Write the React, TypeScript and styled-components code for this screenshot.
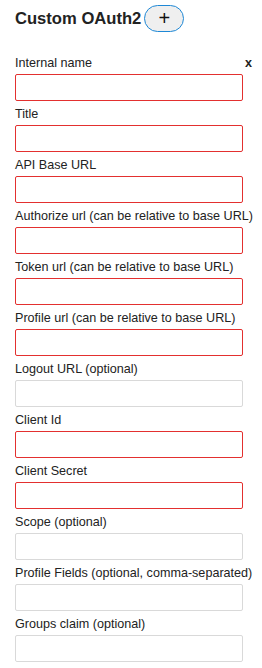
import styled, { createGlobalStyle } from "styled-components";

const GlobalStyle = createGlobalStyle`
  body {
    margin: 0;
    background: #fff;
    font-family: "Liberation Sans", Arial, sans-serif;
    color: #222;
  }
`;

const Panel = styled.div`
  padding: 5px 0 0 15px;
  width: 238px;
`;

const Header = styled.div`
  display: flex;
  align-items: center;
  gap: 3px;
  height: 27px;
  margin-bottom: 18px;
`;

const Heading = styled.h3`
  margin: 0;
  font-size: 16.6px;
  font-weight: 700;
  color: #222;
`;

const AddButton = styled.button`
  width: 40px;
  height: 27px;
  border-radius: 14px;
  border: 1px solid #1e88d6;
  background: #efefef;
  color: #111;
  font-size: 20px;
  line-height: 1;
  padding: 0 0 2px;
  font-family: "Liberation Sans", Arial, sans-serif;
`;

const Field = styled.div`
  display: flex;
  flex-direction: column;
`;

const LabelRow = styled.div`
  display: flex;
  justify-content: space-between;
  align-items: baseline;
  box-sizing: border-box;
  height: 24px;
  padding-top: 6px;
`;

const Label = styled.label`
  font-size: 12.6px;
  color: #222;
  white-space: nowrap;
`;

const Remove = styled.span`
  font-size: 12.6px;
  font-weight: 700;
  color: #222;
  margin-right: 1px;
`;

const Input = styled.input<{ $invalid?: boolean }>`
  box-sizing: border-box;
  width: 228px;
  height: 27px;
  margin: 0;
  border: 1px solid ${(p) => (p.$invalid ? "#e3302f" : "#d9d9d9")};
  border-radius: 2px;
  background: #fff;
  padding: 0 6px;
  outline: none;
`;

const fields = [
  { label: "Internal name", invalid: true },
  { label: "Title", invalid: true },
  { label: "API Base URL", invalid: true },
  { label: "Authorize url (can be relative to base URL)", invalid: true },
  { label: "Token url (can be relative to base URL)", invalid: true },
  { label: "Profile url (can be relative to base URL)", invalid: true },
  { label: "Logout URL (optional)", invalid: false },
  { label: "Client Id", invalid: true },
  { label: "Client Secret", invalid: true },
  { label: "Scope (optional)", invalid: false },
  { label: "Profile Fields (optional, comma-separated)", invalid: false },
  { label: "Groups claim (optional)", invalid: false },
];

function App() {
  return (
    <>
      <GlobalStyle />
      <Panel>
        <Header>
          <Heading>Custom OAuth2</Heading>
          <AddButton type="button">+</AddButton>
        </Header>
        {fields.map((f, i) => (
          <Field key={f.label}>
            <LabelRow>
              <Label>{f.label}</Label>
              {i === 0 && <Remove>x</Remove>}
            </LabelRow>
            <Input type="text" $invalid={f.invalid} />
          </Field>
        ))}
      </Panel>
    </>
  );
}

export default App;
